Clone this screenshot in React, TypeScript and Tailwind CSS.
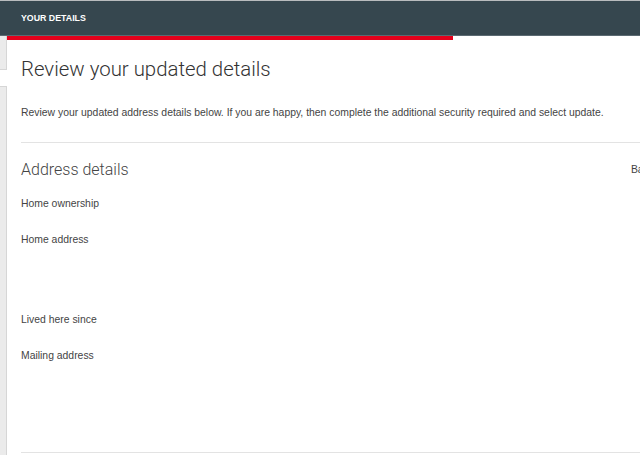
import React from "react";

export default function App() {
  return (
    <div className="w-[640px] h-[455px] overflow-hidden bg-white font-['Liberation_Sans',Arial,sans-serif] border-t border-[#b9bcbe]">
      <header className="h-[35px] bg-[#36474f] border-b border-[#5b6a72] px-[21px] pt-px flex items-center">
        <span className="text-[8.8px] font-bold text-white">YOUR DETAILS</span>
      </header>
      <div className="flex h-[420px]">
        <div className="w-[7px] flex flex-col gap-[16px] shrink-0">
          <div className="h-[34px] bg-[#ebebeb] border-r border-b border-[#d6d6d6]" />
          <div className="flex-1 bg-[#ebebeb] border-r border-t border-[#d6d6d6]" />
        </div>
        <main className="flex-1 min-w-0">
          <div className="h-[4px] w-[446px] bg-[#e4001b]" />
          <div className="pl-[14px] w-[680px]">
            <h1 className="mt-[17px] text-[20.4px] leading-[25px] font-light text-[#333] font-['Roboto',sans-serif]">
              Review your updated details
            </h1>
            <p className="mt-[25px] text-[10.4px] leading-[12px] text-[#444]">
              Review your updated address details below. If you are happy, then complete the additional security required and select update.
            </p>
            <div className="mt-[23px] h-px bg-[#e3e3e3]" />
            <div className="mt-[17px] flex items-center justify-between w-[633px]">
              <h2 className="text-[16px] leading-[20px] font-light text-[#444] font-['Roboto',sans-serif]">Address details</h2>
              <span className="text-[10.4px] text-[#444]">Back</span>
            </div>
            <dl className="mt-[18px] text-[10.4px] leading-[12px] text-[#444]">
              <dt className="h-[36px]">Home ownership</dt>
              <dt className="h-[80px]">Home address</dt>
              <dt className="h-[36px]">Lived here since</dt>
              <dt className="h-[102px]">Mailing address</dt>
            </dl>
            <div className="h-px bg-[#e3e3e3]" />
          </div>
        </main>
      </div>
    </div>
  );
}
